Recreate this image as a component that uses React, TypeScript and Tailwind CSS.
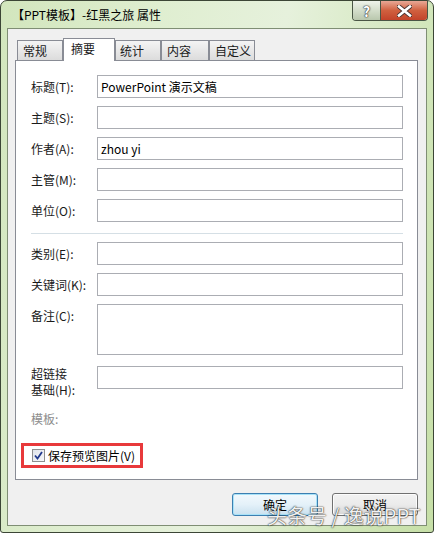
import React from "react";

type RowProps = { label: React.ReactNode; value?: string; tall?: boolean; labelClass?: string };

function Row({ label, value, tall, labelClass }: RowProps) {
  return (
    <div className="flex">
      <div className={`w-[66px] shrink-0 ${labelClass ?? "leading-[23px]"}`}>{label}</div>
      <div
        className={`w-[306px] border border-[#abadb3] bg-white pl-[3px] leading-[21px] text-[12px] text-black ${
          tall ? "h-[51px]" : "h-[23px]"
        }`}
      >
        {value}
      </div>
    </div>
  );
}

function Tab({ label, active, width, pad }: { label: string; active?: boolean; width: string; pad: string }) {
  if (active) {
    return (
      <div
        className={`relative z-10 -mb-px flex h-[23px] items-center border border-b-0 border-[#898c95] bg-white pb-[3px] ${width} ${pad}`}
      >
        {label}
      </div>
    );
  }
  return (
    <div
      className={`flex h-[20px] items-center border border-b-0 border-[#898c95] bg-gradient-to-b from-[#f4f4f4] to-[#dcdcdc] ${width} ${pad}`}
    >
      {label}
    </div>
  );
}

export default function App() {
  return (
    <div className="h-[533px] w-[434px] bg-white font-['Noto_Sans_CJK_SC',sans-serif] text-[12px] text-[#1a1a1a]">
      <div className="relative flex h-full w-full flex-col rounded-t-[7px] rounded-b-[3px] border border-[#3c4636] bg-[linear-gradient(100deg,#d2e6bd_0%,#dfeed0_30%,#e6f1dc_55%,#d3e7bd_80%,#c6dfa7_100%)] px-[6px] pb-[6px]">
        {/* Title bar */}
        <div className="flex h-[27px] shrink-0">
          <div className="flex items-center pl-[5px] pt-[1px] text-[12px] leading-none text-black">
            【PPT模板】-红黑之旅 属性
          </div>
          <div className="ml-auto mr-[-1px] flex h-[20px] self-start overflow-hidden rounded-b-[4px] border border-t-0 border-[#4a5645]">
            <div className="flex w-[27px] items-center justify-center bg-gradient-to-b from-[#eef3ea] via-[#d3ddca] to-[#b9c7ad] text-[14px] font-bold leading-none text-white [text-shadow:0_0_1px_#333,0_0_1px_#333,0_0_2px_#555]">
              ?
            </div>
            <div className="flex w-[47px] items-center justify-center border-l border-[#4a5645] bg-gradient-to-b from-[#e8a896] via-[#d0603f] to-[#c2432a]">
              <svg width="15" height="12" viewBox="0 0 15 12">
                <path d="M2 1.5 L13 10.5 M13 1.5 L2 10.5" stroke="#4a3430" strokeWidth="4.4" strokeLinecap="square" />
                <path d="M2 1.5 L13 10.5 M13 1.5 L2 10.5" stroke="#ffffff" strokeWidth="2.6" strokeLinecap="square" />
              </svg>
            </div>
          </div>
        </div>

        {/* Client area */}
        <div className="flex flex-1 flex-col border border-[#7f8e74] bg-[#f0f0f0]">
          {/* Tabs */}
          <div className="flex h-[31px] items-end pl-[9px]">
            <Tab label="常规" width="w-[46px]" pad="pl-[5px]" />
            <Tab label="摘要" active width="w-[52px]" pad="pl-[7px]" />
            <Tab label="统计" width="w-[46px]" pad="pl-[4px]" />
            <Tab label="内容" width="w-[48px]" pad="pl-[5px]" />
            <Tab label="自定义" width="w-[46px]" pad="pl-[5px]" />
          </div>

          {/* Panel */}
          <div className="ml-[7px] mr-[8px] flex h-[420px] flex-col border border-[#898c95] bg-white pl-[15px] pt-[14px] pb-[11px]">
            <div className="flex flex-col gap-[8px]">
              <Row label="标题(T):" value="PowerPoint 演示文稿" />
              <Row label="主题(S):" />
              <Row label="作者(A):" value="zhou yi" />
              <Row label="主管(M):" />
              <Row label="单位(O):" />
            </div>
            <div className="mt-[11px] h-px w-[372px] bg-[#d5dfe5]" />
            <div className="mt-[8px] flex flex-col gap-[8px]">
              <Row label="类别(E):" />
              <Row label="关键词(K):" />
              <Row label="备注(C):" tall />
            </div>
            <div className="mt-[11px]">
              <Row
                labelClass="leading-[16px]"
                label={
                  <>
                    超链接
                    <br />
                    基础(H):
                  </>
                }
              />
            </div>
            <div className="mt-[12px] leading-[18px] text-[#8d8d8d]">模板:</div>

            <div className="-ml-[10px] mt-auto flex h-[25px] w-[122px] items-center border-[3px] border-[#e8393b] pl-[8px]">
              <div className="flex h-[13px] w-[13px] items-center justify-center border border-[#8e8f8f] bg-gradient-to-br from-[#dfe3ea] to-[#f7f8fa]">
                <svg width="9" height="9" viewBox="0 0 9 9">
                  <path d="M1 4.5 L3.5 7.5 L8 1" fill="none" stroke="#21398c" strokeWidth="1.8" />
                </svg>
              </div>
              <span className="ml-[3px] leading-none text-black">保存预览图片(V)</span>
            </div>
          </div>

          {/* Buttons */}
          <div className="mr-[8px] mt-[13px] flex justify-end gap-[14px]">
            <div className="flex h-[23px] w-[86px] items-center justify-center rounded-[3px] border border-[#3c7fb1] bg-gradient-to-b from-[#f2f9fd] via-[#e4f1f9] to-[#c9e1ef] text-black shadow-[inset_0_0_0_1px_#a8e2f8]">
              确定
            </div>
            <div className="flex h-[23px] w-[86px] items-center justify-center rounded-[3px] border border-[#707070] bg-gradient-to-b from-[#f2f2f2] via-[#ebebeb] to-[#d6d6d6] text-black shadow-[inset_0_0_0_1px_#fcfcfc]">
              取消
            </div>
          </div>
        </div>

        {/* Watermark */}
        <div className="absolute left-[266px] top-[503px] whitespace-nowrap text-[20px] leading-[24px] text-white/95 [text-shadow:0_0_1px_rgba(0,0,0,0.9),0_0_2px_rgba(0,0,0,0.6)]">
          头条号 / 逸说PPT
        </div>
      </div>
    </div>
  );
}
